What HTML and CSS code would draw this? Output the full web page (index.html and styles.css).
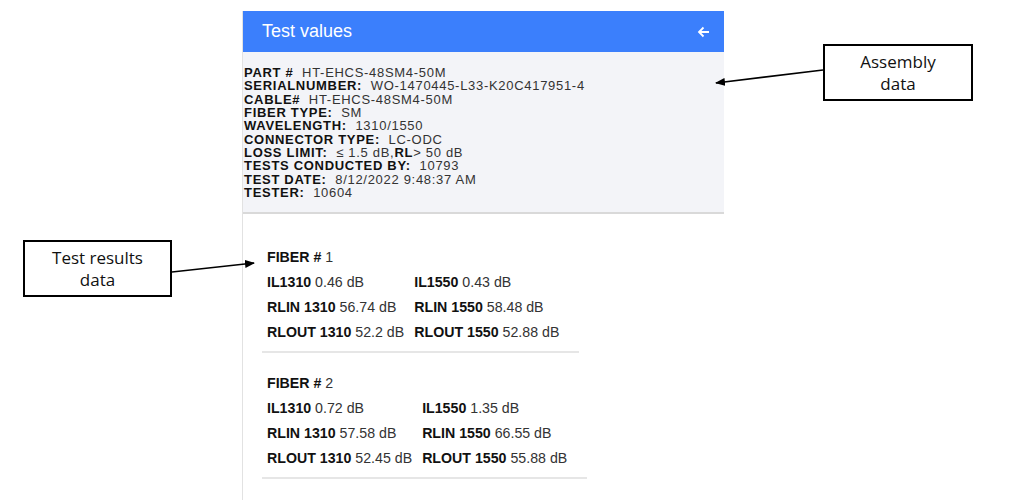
FILE: index.html
```html
<!DOCTYPE html>
<html>
<head>
<meta charset="utf-8">
<link rel="stylesheet" href="styles.css">
</head>
<body>
<div class="page">
  <div class="panel">
    <div class="header">
      <span class="title">Test values</span>
      <svg class="back" width="13" height="12" viewBox="0 0 13 12"><path d="M12 6H2M6.5 1.5L2 6l4.5 4.5" fill="none" stroke="#fff" stroke-width="1.8"/></svg>
    </div>
    <div class="assembly">
      <div><b>PART #</b>&nbsp; HT-EHCS-48SM4-50M</div>
      <div><b>SERIALNUMBER:</b>&nbsp; WO-1470445-L33-K20C417951-4</div>
      <div><b>CABLE#</b>&nbsp; HT-EHCS-48SM4-50M</div>
      <div><b>FIBER TYPE:</b>&nbsp; SM</div>
      <div><b>WAVELENGTH:</b>&nbsp; 1310/1550</div>
      <div><b>CONNECTOR TYPE:</b>&nbsp; LC-ODC</div>
      <div><b>LOSS LIMIT:</b>&nbsp; ≤ 1.5 dB,<b>RL</b>&gt; 50 dB</div>
      <div><b>TESTS CONDUCTED BY:</b>&nbsp; 10793</div>
      <div><b>TEST DATE:</b>&nbsp; 8/12/2022 9:48:37 AM</div>
      <div><b>TESTER:</b>&nbsp; 10604</div>
    </div>
    <div class="results">
      <div class="fiber">
        <div class="fiber-head"><b>FIBER #</b> 1</div>
        <table class="vals">
          <tr><td><b>IL1310</b> 0.46 dB</td><td><b>IL1550</b> 0.43 dB</td></tr>
          <tr><td><b>RLIN 1310</b> 56.74 dB</td><td><b>RLIN 1550</b> 58.48 dB</td></tr>
          <tr><td><b>RLOUT 1310</b> 52.2 dB</td><td><b>RLOUT 1550</b> 52.88 dB</td></tr>
        </table>
      </div>
      <div class="fiber">
        <div class="fiber-head"><b>FIBER #</b> 2</div>
        <table class="vals">
          <tr><td><b>IL1310</b> 0.72 dB</td><td><b>IL1550</b> 1.35 dB</td></tr>
          <tr><td><b>RLIN 1310</b> 57.58 dB</td><td><b>RLIN 1550</b> 66.55 dB</td></tr>
          <tr><td><b>RLOUT 1310</b> 52.45 dB</td><td><b>RLOUT 1550</b> 55.88 dB</td></tr>
        </table>
      </div>
    </div>
  </div>

  <div class="note note-assembly">Assembly<br>data</div>
  <div class="note note-results">Test results<br>data</div>
  <svg class="arrows" width="1024" height="500" viewBox="0 0 1024 500">
    <defs>
      <marker id="ah" markerWidth="10" markerHeight="8" refX="9" refY="4" orient="auto" markerUnits="userSpaceOnUse">
        <path d="M0 0L10 4L0 8z" fill="#000"/>
      </marker>
    </defs>
    <line x1="823" y1="70" x2="716" y2="83" stroke="#000" stroke-width="1.6" marker-end="url(#ah)"/>
    <line x1="172" y1="272" x2="254" y2="263" stroke="#000" stroke-width="1.6" marker-end="url(#ah)"/>
  </svg>
</div>
</body>
</html>
```

FILE: styles.css
```css
html, body {
  margin: 0;
  padding: 0;
  background: #fff;
}
.page {
  position: relative;
  width: 1024px;
  height: 500px;
  overflow: hidden;
  padding-top: 11px;
  box-sizing: border-box;
  font-family: "Liberation Sans", Arial, sans-serif;
}
.panel {
  margin-left: 242px;
  width: 482px;
  height: 489px;
  border-left: 1px solid #e2e2e2;
  box-sizing: border-box;
}
.header {
  height: 41px;
  background: #3b7ffc;
  display: flex;
  align-items: center;
  justify-content: space-between;
  padding: 0 14px 0 19px;
}
.title {
  color: #fff;
  font-size: 18px;
}
.back {
  display: block;
}
.assembly {
  background: #f3f4f8;
  padding: 14px 0 13px 1px;
  font-size: 13px;
  letter-spacing: 0.7px;
  line-height: 13.35px;
  color: #333;
  border-bottom: 2px solid #d9d9d9;
}
.assembly b {
  color: #111;
}
.results {
  padding: 31px 0 0 19px;
}
.fiber {
  width: fit-content;
  padding: 0 20px 6px 5px;
  border-bottom: 2px solid #e6e6e6;
  font-size: 14.2px;
  color: #333;
  margin-bottom: 18px;
}
.fiber b {
  color: #111;
}
.fiber-head {
  line-height: 25px;
}
.vals {
  border-collapse: collapse;
}
.vals td {
  padding: 0 10px 0 0;
  height: 25px;
  line-height: 25px;
  white-space: nowrap;
}
.vals td:last-child {
  padding-right: 0;
}
.note {
  position: absolute;
  width: 150px;
  height: 57px;
  box-sizing: border-box;
  border: 2px solid #000;
  background: #fff;
  font-family: "Open Sans", "Noto Sans", sans-serif;
  font-size: 17px;
  line-height: 22px;
  text-align: center;
  padding-top: 5px;
  color: #111;
}
.note-assembly {
  left: 823px;
  top: 44px;
}
.note-results {
  left: 23px;
  top: 240px;
  width: 149px;
}
.arrows {
  position: absolute;
  left: 0;
  top: 0;
  pointer-events: none;
}
```
